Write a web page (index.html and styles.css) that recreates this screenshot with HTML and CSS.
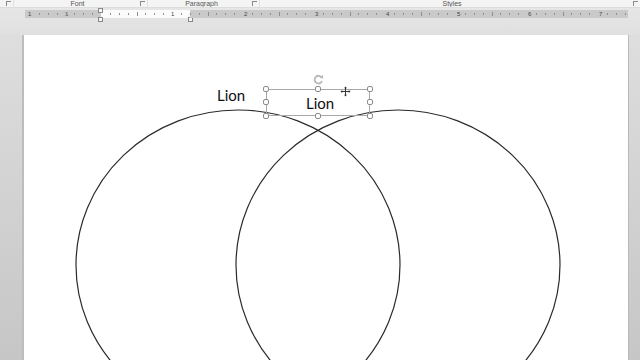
FILE: index.html
```html
<!DOCTYPE html>
<html lang="en">
<head>
  <meta charset="UTF-8">
  <title>Document - Word</title>
  <link rel="stylesheet" href="styles.css">
</head>
<body>
  <div class="window">

    <!-- nomi dei gruppi della barra -->
    <div class="group-bar">
      <div class="group g-clip"><span class="launcher"></span></div>
      <div class="group g-font"><span class="group-name">Font</span><span class="launcher"></span></div>
      <div class="group g-para"><span class="group-name">Paragraph</span><span class="launcher"></span></div>
      <div class="group g-styles"><span class="group-name">Styles</span><span class="launcher"></span></div>
    </div>

    <!-- righello -->
    <div class="ruler-row">
      <div class="ruler">
        <div class="ruler-gray left-part">
          <span class="num">1</span><span class="num n2">1</span>
        </div>
        <div class="ruler-white">
          <span class="num n3">1</span>
          <span class="marker m-left"></span>
          <span class="marker m-right"></span>
        </div>
        <div class="ruler-gray right-part" id="ruler-right"></div>
      </div>
    </div>

    <!-- area documento -->
    <div class="canvas">
      <div class="page">
        <svg class="diagram" width="604" height="330" viewBox="0 0 604 330">
          <ellipse cx="214" cy="230" rx="162" ry="155" fill="none" stroke="#2a2a2a" stroke-width="1.2"/>
          <ellipse cx="374" cy="230" rx="162" ry="155" fill="none" stroke="#2a2a2a" stroke-width="1.2"/>
        </svg>

        <div class="label label-a">Lion</div>

        <div class="textbox">
          <div class="label-b">Lion</div>
          <span class="handle h-tl"></span><span class="handle h-tm"></span><span class="handle h-tr"></span>
          <span class="handle h-ml"></span><span class="handle h-mr"></span>
          <span class="handle h-bl"></span><span class="handle h-bm"></span><span class="handle h-br"></span>
          <svg class="rotate" width="11" height="11" viewBox="0 0 12 12">
            <path d="M9.6 4 A4.2 4.2 0 1 0 9.9 7.6" fill="none" stroke="#b8b8b8" stroke-width="2"/>
            <path d="M7.2 3.8 L11 5.2 L11 1.2 Z" fill="#b8b8b8"/>
          </svg>
          <svg class="move" width="11" height="11" viewBox="0 0 11 11">
            <path d="M5.5 2 V9 M2 5.5 H9" stroke="#333" stroke-width="1"/>
            <path d="M5.5 0.5 L4 2.2 H7 Z M5.5 10.5 L4 8.8 H7 Z M0.5 5.5 L2.2 4 V7 Z M10.5 5.5 L8.8 4 V7 Z" fill="#333"/>
          </svg>
        </div>
      </div>
    </div>
  </div>

  <script>
    // tacche del righello e numeri dei pollici
    var right = document.getElementById("ruler-right");
    var nums = ["2", "3", "4", "5", "6", "7"];
    for (var i = 0; i < nums.length; i++) {
      var s = document.createElement("span");
      s.className = "num";
      s.textContent = nums[i];
      s.style.left = (54 + i * 71) + "px";
      right.appendChild(s);
    }
    var parts = document.querySelectorAll(".ruler-gray, .ruler-white");
    var starts = [0, 76, 165];
    parts.forEach(function (p, k) {
      var w = p.offsetWidth;
      for (var x = 0; x < w; x++) {
        var abs = starts[k] + x - 76;
        var pos = ((abs % 71) + 71) % 71;
        var step = 71 / 8;
        for (var t = 1; t < 8; t++) {
          if (Math.round(t * step) === pos) {
            var tick = document.createElement("i");
            tick.className = t === 4 ? "tick long" : "tick";
            tick.style.left = x + "px";
            p.appendChild(tick);
          }
        }
      }
    });
  </script>
</body>
</html>
```

FILE: styles.css
```css
* {
  margin: 0;
  padding: 0;
  box-sizing: border-box;
}
body {
  width: 640px;
  height: 360px;
  overflow: hidden;
  font-family: "Lato", "Open Sans", sans-serif;
  background: #d0d0d0;
}
.window {
  width: 640px;
  height: 360px;
  display: flex;
  flex-direction: column;
}

/* barra dei gruppi */
.group-bar {
  flex-shrink: 0;
  height: 8px;
  display: flex;
  background: #f4f4f4;
  border-bottom: 1px solid #dcdcdc;
  overflow: hidden;
}
.group {
  position: relative;
  display: flex;
  justify-content: center;
  align-items: flex-start;
  border-right: 1px solid #e2e2e2;
}
.g-clip { width: 14px; }
.g-font { width: 134px; }
.g-para { width: 112px; }
.g-styles { flex: 1; border-right: none; }
.group-name {
  font-family: "Liberation Sans", sans-serif;
  font-size: 7px;
  line-height: 7px;
  color: #555;
}
.g-font .group-name { margin-left: -6px; }
.g-para .group-name { margin-left: -4px; }
.g-styles .group-name { margin-left: 4px; }
.launcher {
  position: absolute;
  right: 2px;
  top: 1px;
  width: 5px;
  height: 5px;
  border-left: 1px solid #8a8a8a;
  border-top: 1px solid #8a8a8a;
}

/* righello */
.ruler-row {
  flex-shrink: 0;
  height: 27px;
  background: linear-gradient(#e6e6e6, #e0e0e0);
  padding: 2px 12px 0 25px;
}
.ruler {
  height: 8px;
  display: flex;
  font-family: "Liberation Sans", sans-serif;
}
.ruler-gray, .ruler-white {
  position: relative;
  height: 8px;
}
.ruler-gray {
  background: #c9c9c9;
}
.left-part { width: 76px; }
.right-part { flex: 1; }
.ruler-white {
  width: 89px;
  background: #fbfbfb;
}
.num {
  position: absolute;
  top: 0;
  font-size: 6px;
  line-height: 8px;
  color: #444;
  left: 3px;
}
.n2 { left: 40px; }
.n3 { left: 70px; }
.tick {
  position: absolute;
  top: 3px;
  width: 1px;
  height: 2px;
  background: #8e8e8e;
}
.tick.long {
  top: 2px;
  height: 4px;
}
.marker {
  position: absolute;
  width: 5px;
  height: 5px;
  border: 1px solid #888;
  background: #f8f8f8;
}
.m-left {
  left: -3px;
  top: 7px;
  box-shadow: 0 -9px 0 -1px #f8f8f8, 0 -9px 0 0 #888;
}
.m-right {
  right: -3px;
  top: 7px;
}

/* area documento */
.canvas {
  flex: 1;
  min-height: 0;
  overflow: hidden;
  background: linear-gradient(#dedede, #c6c6c6);
  padding: 0 12px 0 24px;
}
.page {
  position: relative;
  width: 604px;
  height: 330px;
  background: #fff;
  box-shadow: -2px 0 0 #bdbdbd, 1px 0 0 #b9b9b9, 0 -1px 0 #c4c4c4;
  overflow: hidden;
}
.diagram {
  position: absolute;
  left: 0;
  top: 0;
}
.label {
  position: absolute;
  font-size: 15px;
  line-height: 18px;
  color: #111;
}
.label-a {
  left: 193px;
  top: 51px;
}

/* casella di testo selezionata */
.textbox {
  position: absolute;
  left: 242px;
  top: 54px;
  width: 104px;
  height: 27px;
  border: 1px solid #a8a8a8;
}
.label-b {
  position: absolute;
  left: 39px;
  top: 4px;
  font-size: 15px;
  line-height: 18px;
  color: #111;
}
.handle {
  position: absolute;
  width: 6px;
  height: 6px;
  border: 1px solid #8c8c8c;
  border-radius: 2px;
  background: #fff;
}
.h-tl { left: -4px; top: -4px; }
.h-tm { left: 48px; top: -4px; }
.h-tr { right: -4px; top: -4px; }
.h-ml { left: -4px; top: 9px; }
.h-mr { right: -4px; top: 9px; }
.h-bl { left: -4px; bottom: -4px; }
.h-bm { left: 48px; bottom: -4px; }
.h-br { right: -4px; bottom: -4px; }
.rotate {
  position: absolute;
  left: 46px;
  top: -16px;
}
.move {
  position: absolute;
  left: 73px;
  top: -4px;
}
```
